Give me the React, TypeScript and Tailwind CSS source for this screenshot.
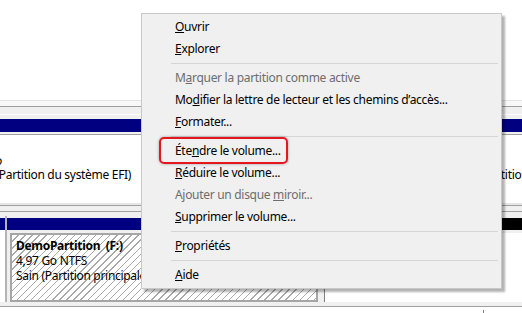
import React from 'react';

type Entry =
  | { kind: 'item'; pre: string; key: string; post: string; disabled?: boolean }
  | { kind: 'sep' };

const menu: Entry[] = [
  { kind: 'item', pre: '', key: 'O', post: 'uvrir' },
  { kind: 'item', pre: '', key: 'E', post: 'xplorer' },
  { kind: 'sep' },
  { kind: 'item', pre: 'M', key: 'a', post: 'rquer la partition comme active', disabled: true },
  { kind: 'item', pre: 'Mo', key: 'd', post: "ifier la lettre de lecteur et les chemins d’accès..." },
  { kind: 'item', pre: '', key: 'F', post: 'ormater...' },
  { kind: 'sep' },
  { kind: 'item', pre: 'Éte', key: 'n', post: 'dre le volume...' },
  { kind: 'item', pre: '', key: 'R', post: 'éduire le volume...' },
  { kind: 'item', pre: 'Ajouter un disque ', key: 'm', post: 'iroir...', disabled: true },
  { kind: 'item', pre: '', key: 'S', post: 'upprimer le volume...' },
  { kind: 'sep' },
  { kind: 'item', pre: '', key: 'P', post: 'ropriétés' },
  { kind: 'sep' },
  { kind: 'item', pre: '', key: 'A', post: 'ide' },
];

const hatch =
  'bg-[repeating-linear-gradient(135deg,#ffffff_0px,#ffffff_4px,#a9a9a9_4px,#a9a9a9_5px)]';

function ContextMenu() {
  return (
    <div className="absolute left-[141px] top-[13px] w-[361px] border border-[#c8c8c8] bg-[#f0f0f0] py-[2px] shadow-[3px_3px_2px_rgba(0,0,0,0.3)]">
      {menu.map((m, i) =>
        m.kind === 'sep' ? (
          <div key={i} className="flex h-[7px] items-center pl-[29px] pr-[3px]">
            <div className="h-px w-full bg-[#d5d5d5]" />
          </div>
        ) : (
          <div
            key={i}
            className={`flex h-[22px] items-center pl-[33px] ${
              m.disabled ? 'text-[#6d6d6d]' : 'text-black'
            }`}
          >
            <span className="whitespace-pre">
              {m.pre}
              <span className="underline underline-offset-[1px]">{m.key}</span>
              {m.post}
            </span>
          </div>
        )
      )}
    </div>
  );
}

export default function App() {
  return (
    <div className="relative h-[313px] w-[522px] overflow-hidden bg-white text-[12px] tracking-[-0.3px] font-['Noto_Sans',sans-serif]">
      {/* volume list pane */}
      <div className="h-[100px] bg-white" />

      {/* splitter + disk 0 */}
      <div className="h-px bg-[#e3e3e3]" />
      <div className="h-[5px] bg-[#f8f8f8]" />
      <div className="h-px bg-[#a0a0a0]" />
      <div className="h-[7px] bg-[#f0f0f0]" />
      <div className="h-px bg-white" />
      <div className="h-[4px] bg-[#f0f0f0]" />
      <div className="h-[13px] bg-[#000080]" />
      <div className="h-[2px] bg-[#f0f0f0]" />
      <div className="h-px bg-[#a0a0a0]" />

      <div className="flex h-[68px] bg-white pt-[19px] leading-[14px] text-black">
        <div className="w-[454px] shrink-0">
          <div className="-ml-[38px]">100 Mo</div>
          <div className="-ml-[30px] whitespace-nowrap">Sain (Partition du système EFI)</div>
        </div>
        <div className="pt-[14px] whitespace-nowrap">Sain (Partition de base)</div>
      </div>

      {/* disk 1 */}
      <div className="h-[2px] bg-[#e6e6e6]" />
      <div className="h-px bg-[#a0a0a0]" />
      <div className="h-[5px] bg-[#f0f0f0]" />
      <div className="h-px bg-[#a0a0a0]" />

      <div className="flex h-[90px]">
        <div className="flex w-[5px] flex-col">
          <div className="h-[6px] bg-[#f0f0f0]" />
          <div className="h-[12px] bg-[#000080]" />
          <div className="flex-1 bg-white" />
        </div>
        <div className="flex w-[2px] flex-col">
          <div className="h-[4px] bg-[#f0f0f0]" />
          <div className="flex-1 bg-[#b4b4b4]" />
        </div>
        <div className="flex w-[313px] flex-col bg-[#f0f0f0]">
          <div className="h-[6px]" />
          <div className="h-[12px] bg-[#000080]" />
          <div className="flex flex-1 pl-[3px] pr-[2px] pt-[3px]">
            <div className={`flex-1 overflow-hidden border-2 border-[#a6a6a6] pl-[4px] pt-[3px] leading-[15px] text-black ${hatch}`}>
              <div className="whitespace-nowrap font-bold">DemoPartition&nbsp;&nbsp;(F:)</div>
              <div className="whitespace-nowrap">4,97 Go NTFS</div>
              <div className="whitespace-nowrap">Sain (Partition principale)</div>
            </div>
          </div>
        </div>
        <div className="flex flex-1 flex-col bg-[#f0f0f0]">
          <div className="h-[6px]" />
          <div className="h-[12px] bg-black" />
          <div className="flex flex-1 pt-[3px]">
            <div className="ml-[4px] flex-1 border-l border-[#808080] bg-white" />
          </div>
        </div>
      </div>

      <div className="h-[4px] bg-[#f0f0f0]" />
      <div className="h-px bg-[#a0a0a0]" />
      <div className="flex h-[6px] bg-white">
        <div className="ml-[483px] mt-[3px] h-[3px] w-px bg-[#808080]" />
      </div>

      <ContextMenu />

      {/* highlight */}
      <div className="absolute left-[159px] top-[137px] h-[27px] w-[129px] rounded-[5px] border-2 border-[#e4161e] shadow-[0_0_3px_rgba(0,0,0,0.35)]" />
    </div>
  );
}
